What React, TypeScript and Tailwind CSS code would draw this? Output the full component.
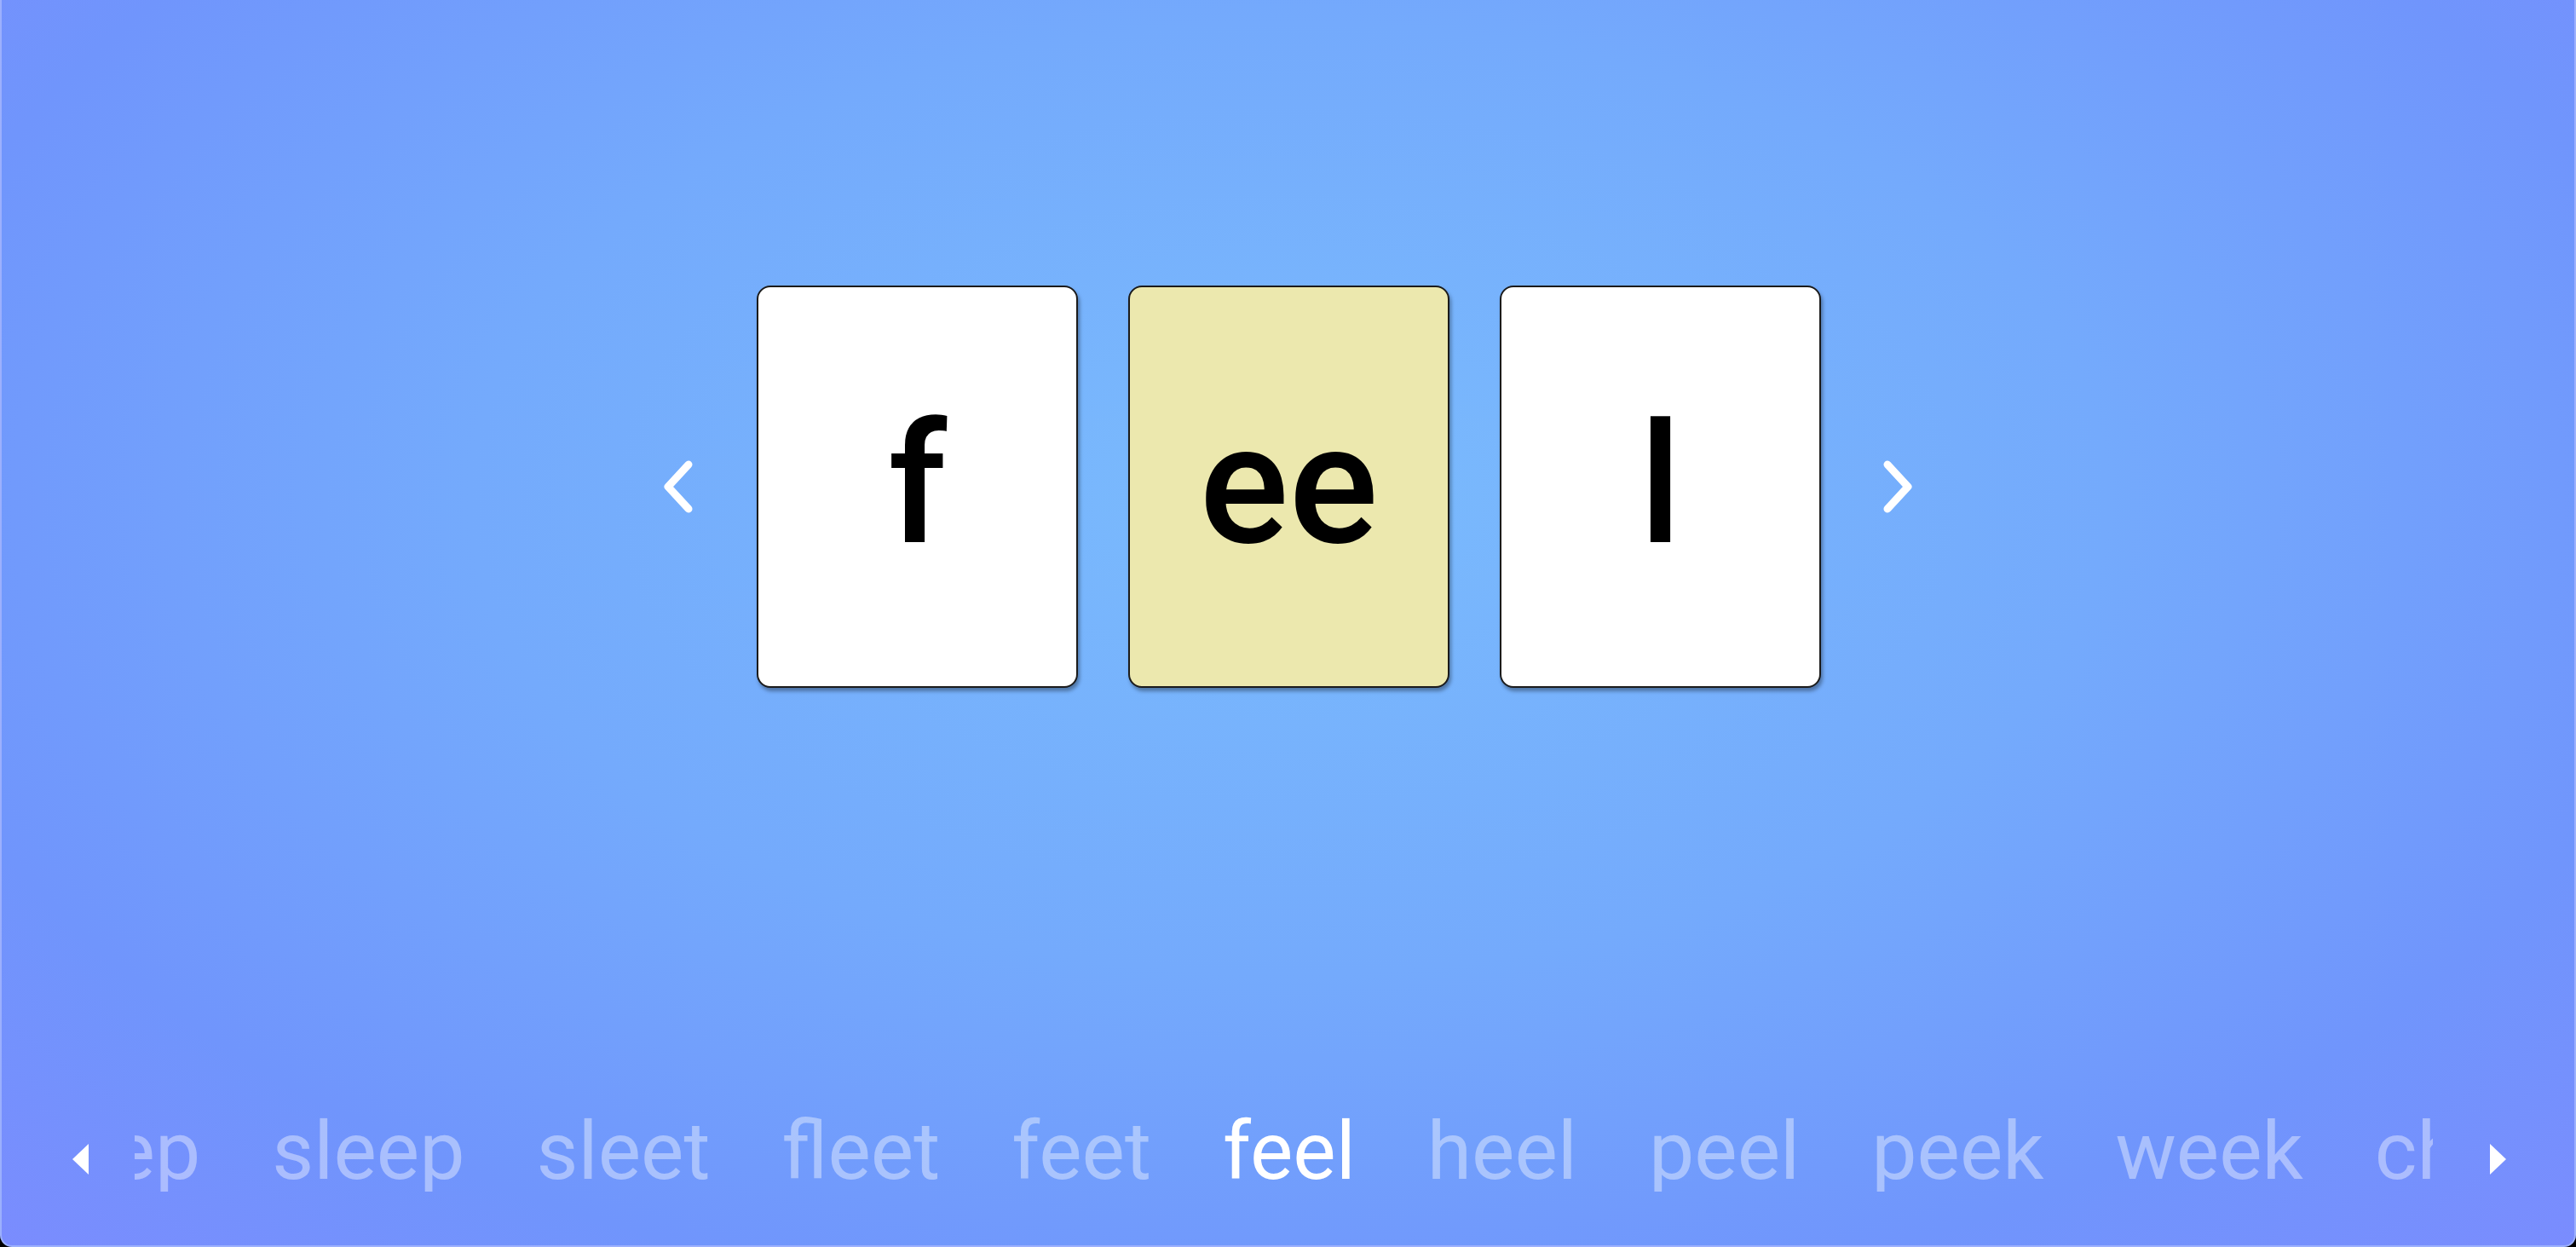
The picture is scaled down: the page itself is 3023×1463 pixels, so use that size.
import React from "react";

const before = ["deep", "sleep", "sleet", "fleet", "feet"];
const active = "feel";
const after = ["heel", "peel", "peek", "week", "cheek"];

const tiles = [
  { text: "f", vowel: false },
  { text: "ee", vowel: true },
  { text: "l", vowel: false },
];

const Chevron = ({ dir }: { dir: "left" | "right" }) => (
  <svg width="36" height="64" viewBox="0 0 36 64" className="shrink-0">
    <path
      d={dir === "left" ? "M30 6 L6 32 L30 58" : "M6 6 L30 32 L6 58"}
      fill="none"
      stroke="white"
      strokeWidth="9"
      strokeLinecap="round"
      strokeLinejoin="round"
    />
  </svg>
);

const Triangle = ({ dir }: { dir: "left" | "right" }) => (
  <svg width="19" height="36" viewBox="0 0 19 36" className="mt-[20px] shrink-0">
    <path d={dir === "left" ? "M19 0 L0 18 L19 36 Z" : "M0 0 L19 18 L0 36 Z"} fill="white" />
  </svg>
);

const Word = ({ text, on }: { text: string; on?: boolean }) => (
  <span className={`shrink-0 px-[42px] ${on ? "text-white" : "text-white/40"}`}>{text}</span>
);

export default function App() {
  return (
    <div className="min-h-screen bg-black">
      <div className="flex h-[1463px] flex-col overflow-hidden rounded-b-[14px] border-x-2 border-b-2 border-[#9cb0fd] bg-[radial-gradient(ellipse_at_50%_40%,#7abbfd_0%,#74aafc_45%,#7095fc_78%,#7a8cfe_100%)]">
        {/* tiles */}
        <div className="flex items-center justify-center pt-[335px]">
          <Chevron dir="left" />
          <div className="ml-[74px] mr-[72px] flex gap-[59px]">
            {tiles.map((t, i) => (
              <div
                key={i}
                className={`flex h-[472px] w-[377px] items-center justify-center rounded-[16px] border-2 border-[#1b1b1b] pb-[4px] shadow-[2px_4px_4px_rgba(0,0,0,0.35)] ${
                  t.vowel ? "bg-[#ece8ae]" : "bg-white"
                }`}
              >
                <span className="font-[Roboto,sans-serif] text-[196px] font-medium leading-none text-black">{t.text}</span>
              </div>
            ))}
          </div>
          <Chevron dir="right" />
        </div>

        {/* word strip */}
        <div className="mt-auto mb-[63px] flex h-[96px] items-center pl-[83px] font-[Roboto,sans-serif] text-[95px] leading-none">
          <Triangle dir="left" />
          <div className="ml-[54px] mr-[67px] flex overflow-hidden">
            <div className="flex w-[1235px] justify-end overflow-hidden">
              {before.map((w) => (
                <Word key={w} text={w} />
              ))}
            </div>
            <Word text={active} on />
            <div className="flex w-[1222px] overflow-hidden">
              {after.map((w) => (
                <Word key={w} text={w} />
              ))}
            </div>
          </div>
          <Triangle dir="right" />
        </div>
      </div>
    </div>
  );
}
